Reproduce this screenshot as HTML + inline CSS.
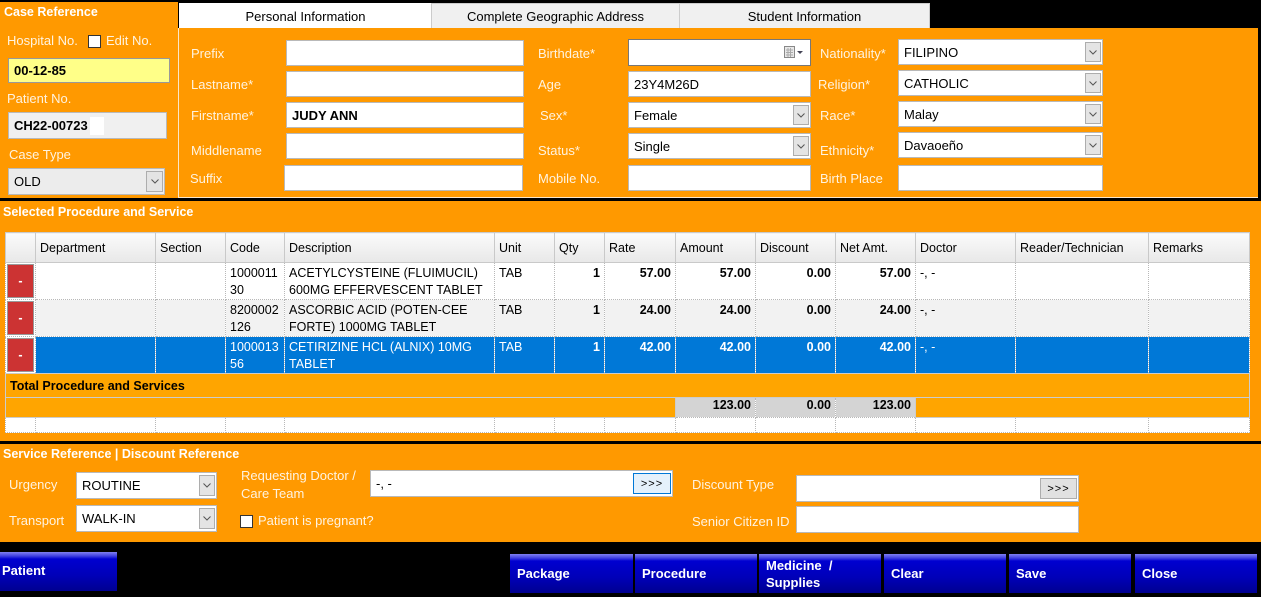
<!DOCTYPE html>
<html><head><meta charset="utf-8"><style>
*{box-sizing:border-box;margin:0;padding:0}
body{width:1261px;height:597px;background:#000;position:relative;overflow:hidden;font-family:"Liberation Sans",sans-serif;font-size:13px;color:#000}
.a{position:absolute}
.or{background:#ff9900}
.lb{position:absolute;color:#fff3e0;font-size:13px;white-space:nowrap}
.h{position:absolute;color:#fff;font-weight:bold;font-size:12.5px;white-space:nowrap}
.in{position:absolute;background:#fff;border:1px solid #b9b9b9;padding:0 5px;display:flex;align-items:center;font-size:13px;white-space:nowrap;overflow:hidden}
.chev{position:absolute;right:1px;top:2px;bottom:2px;width:16px;background:#e4e4e4;border:1px solid #adadad;display:flex;align-items:center;justify-content:center}
.tab{position:absolute;top:3px;height:26px;display:flex;align-items:center;justify-content:center;font-size:13px;border:1px solid #ccc}
table{border-collapse:collapse;position:absolute;left:5px;top:232px;width:1244px;table-layout:fixed;background:#fff}
td,th{border:1px dotted #b8b8b8;font-size:12.5px;padding:0 4px;overflow:hidden;white-space:nowrap;vertical-align:top}
th{font-weight:normal;text-align:left;background:linear-gradient(#fafafa,#e8e8e8);border:1px solid #c9c9c9;height:30px;vertical-align:middle}
.r td{height:37px;padding-top:2px;line-height:17px}
.r td.w{white-space:normal}
.n{text-align:right;font-weight:bold}
.btnm{padding:0!important;background:#fff}
.mb{margin:1px 1px;height:34px;background:#cc3333;color:#fff;font-weight:bold;display:flex;align-items:center;justify-content:center;border:1px solid #999}
.sel2 td{background:#0078d7;color:#fff}
.bt{position:absolute;height:39px;background:linear-gradient(#8080f0 0,#4040e0 4px,#0000d0 7px,#0000b8 60%,#000090);color:#fff;font-weight:bold;font-size:13px;padding:0 7px;display:flex;align-items:center;line-height:17px}
.cb{position:absolute;width:13px;height:13px;background:#fff;border:1px solid #333}
.gb{position:absolute;background:#e5f1fb;border:1px solid #0078d7;font-size:11px;display:flex;align-items:center;justify-content:center;letter-spacing:1px}
</style></head><body>
<svg width="0" height="0" style="position:absolute"><defs><symbol id="cv" viewBox="0 0 8 5"><path d="M0.5 0.5L4 4L7.5 0.5" fill="none" stroke="#555" stroke-width="1"/></symbol></defs></svg>
<!-- left panel -->
<div class="a or" style="left:0;top:2px;width:178px;height:196px"></div>
<div class="h" style="left:4px;top:5px">Case Reference</div>
<div class="lb" style="left:7px;top:33px">Hospital No.</div>
<div class="cb" style="left:88px;top:35px"></div>
<div class="lb" style="left:106px;top:33px">Edit No.</div>
<div class="in" style="left:8px;top:58px;width:162px;height:25px;background:#ffff88;border-color:#999;font-weight:bold">00-12-85</div>
<div class="lb" style="left:7px;top:91px">Patient No.</div>
<div class="in" style="left:8px;top:112px;width:159px;height:27px;background:#f0f0f0;font-weight:bold;padding-left:5px">CH22-00723<span style="display:inline-block;width:14px;height:18px;background:#fff;margin-left:2px"></span></div>
<div class="lb" style="left:9px;top:147px">Case Type</div>
<div class="in" style="left:8px;top:168px;width:157px;height:27px;background:#ececec">OLD<div class="chev" style="width:17px"><svg width="8" height="5"><use href="#cv"/></svg></div></div>

<!-- tabs -->
<div class="tab" style="left:179px;width:253px;background:#fff;border-color:#fff">Personal Information</div>
<div class="tab" style="left:431px;width:249px;background:#f0f0f0">Complete Geographic Address</div>
<div class="tab" style="left:679px;width:251px;background:#f0f0f0">Student Information</div>
<div class="a or" style="left:178px;top:28px;width:1080px;height:170px;border-left:1px solid #fbe6c8;border-bottom:1px solid #fbe6c8"></div>

<div class="lb" style="left:191px;top:46px">Prefix</div>
<div class="in" style="left:286px;top:40px;width:238px;height:26px"></div>
<div class="lb" style="left:191px;top:77px">Lastname*</div>
<div class="in" style="left:286px;top:71px;width:238px;height:26px"></div>
<div class="lb" style="left:191px;top:108px">Firstname*</div>
<div class="in" style="left:286px;top:102px;width:238px;height:26px;font-weight:bold">JUDY ANN</div>
<div class="lb" style="left:191px;top:143px">Middlename</div>
<div class="in" style="left:286px;top:133px;width:238px;height:26px"></div>
<div class="lb" style="left:190px;top:171px">Suffix</div>
<div class="in" style="left:284px;top:165px;width:239px;height:26px"></div>

<div class="lb" style="left:538px;top:46px">Birthdate*</div>
<div class="in" style="left:628px;top:39px;width:183px;height:27px;border-color:#777"><svg class="a" style="right:6px;top:6px" width="20" height="14"><rect x="0.5" y="0.5" width="10" height="11" fill="#e8e8e8" stroke="#888"/><path d="M2 4h7M2 6.5h7M2 9h7M4 2v9M6.5 2v9" stroke="#aaa"/><path d="M13 5h6l-3 3z" fill="#445"/></svg></div>
<div class="lb" style="left:538px;top:77px">Age</div>
<div class="in" style="left:628px;top:71px;width:183px;height:26px">23Y4M26D</div>
<div class="lb" style="left:540px;top:108px">Sex*</div>
<div class="in" style="left:628px;top:102px;width:183px;height:26px">Female<div class="chev"><svg width="8" height="5"><use href="#cv"/></svg></div></div>
<div class="lb" style="left:538px;top:143px">Status*</div>
<div class="in" style="left:628px;top:133px;width:183px;height:26px">Single<div class="chev"><svg width="8" height="5"><use href="#cv"/></svg></div></div>
<div class="lb" style="left:538px;top:171px">Mobile No.</div>
<div class="in" style="left:628px;top:165px;width:183px;height:26px"></div>

<div class="lb" style="left:820px;top:46px">Nationality*</div>
<div class="in" style="left:898px;top:39px;width:205px;height:26px">FILIPINO<div class="chev"><svg width="8" height="5"><use href="#cv"/></svg></div></div>
<div class="lb" style="left:818px;top:77px">Religion*</div>
<div class="in" style="left:898px;top:70px;width:205px;height:26px">CATHOLIC<div class="chev"><svg width="8" height="5"><use href="#cv"/></svg></div></div>
<div class="lb" style="left:820px;top:108px">Race*</div>
<div class="in" style="left:898px;top:101px;width:205px;height:26px">Malay<div class="chev"><svg width="8" height="5"><use href="#cv"/></svg></div></div>
<div class="lb" style="left:820px;top:143px">Ethnicity*</div>
<div class="in" style="left:898px;top:132px;width:205px;height:26px">Davaoeño<div class="chev"><svg width="8" height="5"><use href="#cv"/></svg></div></div>
<div class="lb" style="left:820px;top:171px">Birth Place</div>
<div class="in" style="left:898px;top:165px;width:205px;height:26px"></div>

<!-- procedures -->
<div class="a or" style="left:0;top:201px;width:1261px;height:240px"></div>
<div class="h" style="left:3px;top:205px">Selected Procedure and Service</div>
<table>
<colgroup><col style="width:30px"><col style="width:120px"><col style="width:70px"><col style="width:59px"><col style="width:210px"><col style="width:60px"><col style="width:50px"><col style="width:71px"><col style="width:80px"><col style="width:80px"><col style="width:80px"><col style="width:100px"><col style="width:133px"><col style="width:101px"></colgroup>
<tr><th></th><th>Department</th><th>Section</th><th>Code</th><th>Description</th><th>Unit</th><th>Qty</th><th>Rate</th><th>Amount</th><th>Discount</th><th>Net Amt.</th><th>Doctor</th><th>Reader/Technician</th><th>Remarks</th></tr>
<tr class="r"><td class="btnm"><div class="mb">-</div></td><td></td><td></td><td class="w">1000011 30</td><td class="w">ACETYLCYSTEINE (FLUIMUCIL) 600MG EFFERVESCENT TABLET</td><td>TAB</td><td class="n">1</td><td class="n">57.00</td><td class="n">57.00</td><td class="n">0.00</td><td class="n">57.00</td><td>-, -</td><td></td><td></td></tr>
<tr class="r" style="background:#f2f2f2"><td class="btnm"><div class="mb">-</div></td><td></td><td></td><td class="w">8200002 126</td><td class="w">ASCORBIC ACID (POTEN-CEE FORTE) 1000MG TABLET</td><td>TAB</td><td class="n">1</td><td class="n">24.00</td><td class="n">24.00</td><td class="n">0.00</td><td class="n">24.00</td><td>-, -</td><td></td><td></td></tr>
<tr class="r sel2"><td class="btnm" style="background:#fff"><div class="mb">-</div></td><td></td><td></td><td class="w">1000013 56</td><td class="w">CETIRIZINE HCL (ALNIX) 10MG TABLET</td><td>TAB</td><td class="n">1</td><td class="n">42.00</td><td class="n">42.00</td><td class="n">0.00</td><td class="n">42.00</td><td>-, -</td><td></td><td></td></tr>
<tr><td colspan="14" style="background:#ffa500;height:24px;font-weight:bold;border:1px solid #ccc;vertical-align:middle">Total Procedure and Services</td></tr>
<tr style="height:20px"><td colspan="8" style="background:#ffa500;border:1px solid #ccc"></td><td class="n" style="background:#d4d4d4">123.00</td><td class="n" style="background:#d4d4d4">0.00</td><td class="n" style="background:#d4d4d4">123.00</td><td colspan="3" style="background:#ffa500;border:1px solid #ccc"></td></tr>
<tr style="height:15px"><td></td><td></td><td></td><td></td><td></td><td></td><td></td><td></td><td></td><td></td><td></td><td></td><td></td><td></td></tr>
</table>

<!-- service ref -->
<div class="a or" style="left:0;top:444px;width:1261px;height:98px"></div>
<div class="h" style="left:3px;top:447px">Service Reference | Discount Reference</div>
<div class="lb" style="left:9px;top:477px">Urgency</div>
<div class="in" style="left:76px;top:472px;width:141px;height:27px">ROUTINE<div class="chev"><svg width="8" height="5"><use href="#cv"/></svg></div></div>
<div class="lb" style="left:9px;top:513px">Transport</div>
<div class="in" style="left:76px;top:505px;width:141px;height:27px">WALK-IN<div class="chev"><svg width="8" height="5"><use href="#cv"/></svg></div></div>
<div class="lb" style="left:241px;top:468px">Requesting Doctor /</div>
<div class="lb" style="left:241px;top:486px">Care Team</div>
<div class="in" style="left:370px;top:470px;width:303px;height:27px">-, -</div>
<div class="gb" style="left:633px;top:473px;width:38px;height:21px">&gt;&gt;&gt;</div>
<div class="cb" style="left:240px;top:515px"></div>
<div class="lb" style="left:258px;top:513px">Patient is pregnant?</div>
<div class="lb" style="left:692px;top:477px">Discount Type</div>
<div class="in" style="left:796px;top:475px;width:283px;height:27px"></div>
<div class="gb" style="left:1040px;top:478px;width:37px;height:21px;background:#e1e1e1;border-color:#adadad">&gt;&gt;&gt;</div>
<div class="lb" style="left:692px;top:514px">Senior Citizen ID</div>
<div class="in" style="left:796px;top:506px;width:283px;height:27px"></div>

<!-- buttons -->
<div class="bt" style="left:0;top:552px;width:117px;padding-left:2px;padding-bottom:2px">Patient</div>
<div class="bt" style="left:510px;top:554px;width:123px">Package</div>
<div class="bt" style="left:635px;top:554px;width:122px">Procedure</div>
<div class="bt" style="left:759px;top:554px;width:122px">Medicine &nbsp;/<br>Supplies</div>
<div class="bt" style="left:884px;top:554px;width:122px">Clear</div>
<div class="bt" style="left:1009px;top:554px;width:122px">Save</div>
<div class="bt" style="left:1135px;top:554px;width:122px">Close</div>
</body></html>
